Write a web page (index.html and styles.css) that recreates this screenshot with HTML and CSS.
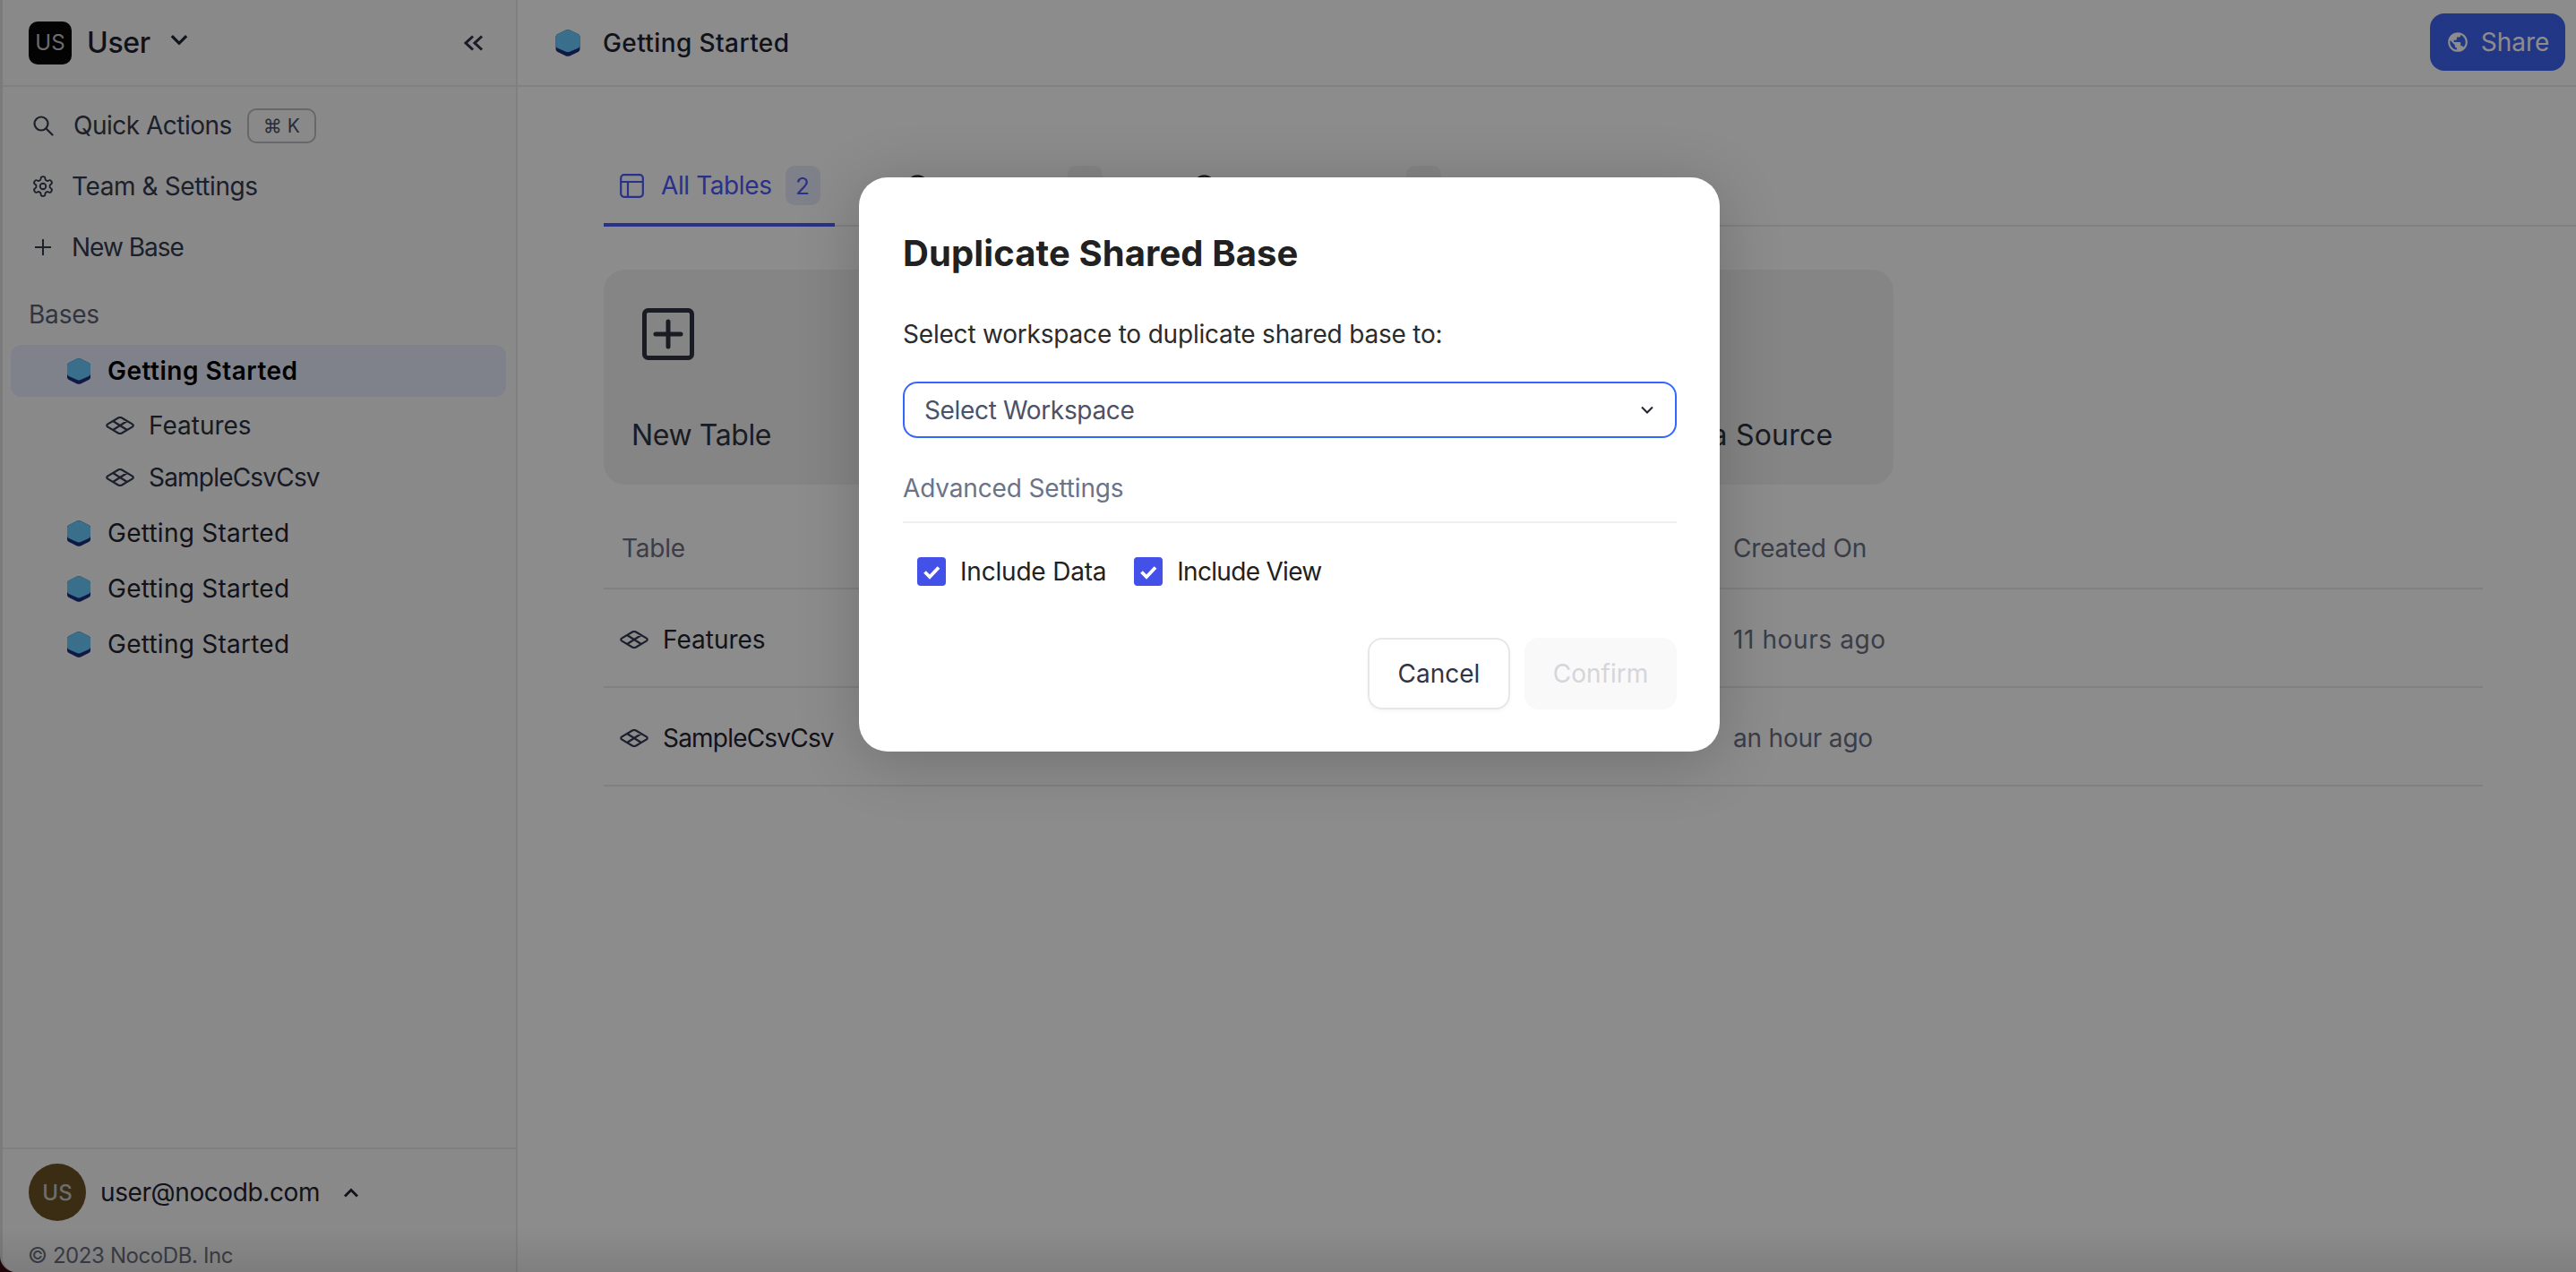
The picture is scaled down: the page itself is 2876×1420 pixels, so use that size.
FILE: index.html
```html
<!DOCTYPE html>
<html lang="en">
<head>
<meta charset="utf-8">
<title>Duplicate Shared Base</title>
<link rel="stylesheet" href="styles.css">
</head>
<body>
<svg class="defs" width="0" height="0" aria-hidden="true">
  <symbol id="base" viewBox="0 0 26 29">
    <path d="M11 .6 2 4.9C.8 5.5 0 6.7 0 8v13c0 1.3.8 2.500 2 3.100l9 4.300c1.300.6 2.700.6 4 0l9-4.300c1.200-.6 2-1.800 2-3.100V8c0-1.300-.8-2.500-2-3.100L15 .6c-1.300-.6-2.700-.6-4 0z" fill="#1a2f7c"/>
    <path d="M11 .6 2 4.900C.8 5.500 0 6.700 0 8v9c0 1.300.8 2.500 2 3.100l9 3.900c1.300.6 2.700.6 4 0l9-3.900c1.200-.6 2-1.800 2-3.100V8c0-1.300-.8-2.500-2-3.100L15 .6c-1.300-.6-2.700-.6-4 0z" fill="#6acaff"/>
  </symbol>
  <symbol id="tbl" viewBox="0 0 32 20">
    <path d="M14 1.500 2 8.600c-1 .6-1 2.200 0 2.800l12 7.100c1.300.7 2.700.7 4 0l12-7.100c1-.6 1-2.200 0-2.800L18 1.500c-1.300-.7-2.700-.7-4 0zM8.500 5.200l15 9.600M23.500 5.200l-15 9.600" fill="none" stroke="currentColor" stroke-width="2.200" stroke-linejoin="round"/>
  </symbol>
  <symbol id="earth" viewBox="0 0 24 24">
    <path fill="currentColor" d="M17.900 17.390C17.640 16.590 16.890 16 16 16H15V13A1 1 0 0 0 14 12H8V10H10A1 1 0 0 0 11 9V7H13A2 2 0 0 0 15 5V4.590C17.930 5.770 20 8.640 20 12C20 14.080 19.200 15.970 17.900 17.390M11 19.930C7.050 19.440 4 16.080 4 12C4 11.380 4.080 10.780 4.210 10.210L9 15V16A2 2 0 0 0 11 18M12 2A10 10 0 0 0 2 12A10 10 0 0 0 12 22A10 10 0 0 0 22 12A10 10 0 0 0 12 2Z"/>
  </symbol>
  <symbol id="check" viewBox="0 0 32 32">
    <path d="M8.500 16.500l5.500 5.500 10-10.500" fill="none" stroke="#fff" stroke-width="3.800"/>
  </symbol>
</svg>

<div class="app">
  <aside class="sidebar">
    <div class="side-head">
      <span class="logo">US</span>
      <span class="side-user">User</span>
      <svg class="chev-user" viewBox="0 0 18 12"><path d="M1.500 2 9 9.500 16.500 2" fill="none" stroke="currentColor" stroke-width="3"/></svg>
      <svg class="collapse" viewBox="0 0 22 18"><path d="M10 1.500 2 9l8 7.500M20 1.500 12 9l8 7.500" fill="none" stroke="currentColor" stroke-width="3"/></svg>
    </div>
    <nav class="nav">
      <div class="nav-row">
        <svg class="nav-icon" viewBox="0 0 24 24"><circle cx="10" cy="10" r="7.500" fill="none" stroke="currentColor" stroke-width="2.200"/><path d="m15.500 15.500 7 7" stroke="currentColor" stroke-width="2.200" stroke-linecap="round"/></svg>
        <span class="nav-label quick">Quick Actions</span>
        <span class="kbd">⌘ K</span>
      </div>
      <div class="nav-row">
        <svg class="nav-icon" viewBox="2 1 20 22"><path fill="none" stroke="currentColor" stroke-width="1.700" d="M12.220 2h-.44a2 2 0 0 0-2 2v.18a2 2 0 0 1-1 1.730l-.43.25a2 2 0 0 1-2 0l-.15-.08a2 2 0 0 0-2.730.73l-.22.38a2 2 0 0 0 .73 2.730l.15.1a2 2 0 0 1 1 1.720v.51a2 2 0 0 1-1 1.740l-.15.09a2 2 0 0 0-.73 2.730l.22.38a2 2 0 0 0 2.730.73l.15-.08a2 2 0 0 1 2 0l.43.25a2 2 0 0 1 1 1.730V20a2 2 0 0 0 2 2h.44a2 2 0 0 0 2-2v-.18a2 2 0 0 1 1-1.730l.43-.25a2 2 0 0 1 2 0l.15.08a2 2 0 0 0 2.730-.73l.22-.39a2 2 0 0 0-.73-2.730l-.15-.08a2 2 0 0 1-1-1.740v-.5a2 2 0 0 1 1-1.740l.15-.09a2 2 0 0 0 .73-2.730l-.22-.38a2 2 0 0 0-2.730-.73l-.15.08a2 2 0 0 1-2 0l-.43-.25a2 2 0 0 1-1-1.730V4a2 2 0 0 0-2-2z"/><circle cx="12" cy="12" r="3" fill="none" stroke="currentColor" stroke-width="1.700"/></svg>
        <span class="nav-label team">Team &amp; Settings</span>
      </div>
      <div class="nav-row">
        <svg class="nav-icon" viewBox="0 0 24 24"><path d="M12 3v18M3 12h18" stroke="currentColor" stroke-width="2"/></svg>
        <span class="nav-label newbase">New Base</span>
      </div>
    </nav>
    <div class="bases-title">Bases</div>
    <div class="base-row selected"><svg class="base-icon"><use href="#base"/></svg><span>Getting Started</span></div>
    <div class="sub-row"><svg class="tbl-icon"><use href="#tbl"/></svg><span>Features</span></div>
    <div class="sub-row"><svg class="tbl-icon"><use href="#tbl"/></svg><span class="squeeze">SampleCsvCsv</span></div>
    <div class="base-row plain"><svg class="base-icon"><use href="#base"/></svg><span>Getting Started</span></div>
    <div class="base-row plain"><svg class="base-icon"><use href="#base"/></svg><span>Getting Started</span></div>
    <div class="base-row plain"><svg class="base-icon"><use href="#base"/></svg><span>Getting Started</span></div>
    <div class="side-foot">
      <div class="foot-user">
        <span class="avatar">US</span>
        <span class="email">user@nocodb.com</span>
        <svg class="chev-up" viewBox="0 0 18 11"><path d="M2 9.500 9 2.500l7 7" fill="none" stroke="currentColor" stroke-width="2.800"/></svg>
      </div>
      <div class="copyright">© 2023 NocoDB. Inc</div>
    </div>
  </aside>

  <main class="main">
    <header class="top">
      <svg class="top-icon"><use href="#base"/></svg>
      <span class="top-title">Getting Started</span>
      <button class="share"><svg class="globe"><use href="#earth"/></svg>Share</button>
    </header>
    <section class="content">
      <div class="tabs">
        <div class="tab active">
          <svg class="tab-icon" viewBox="0 0 27 27"><rect x="1.200" y="1.200" width="24.600" height="24.600" rx="3.500" fill="none" stroke="currentColor" stroke-width="2.200"/><path d="M1.200 9h24.600M9 9v17" fill="none" stroke="currentColor" stroke-width="2.200"/></svg>
          <span class="tab-text">All Tables</span>
          <span class="count">2</span>
        </div>
        <div class="tab ghost-one">
          <svg class="tab-icon" viewBox="0 0 27 27"><circle cx="13.500" cy="13.500" r="11" fill="none" stroke="currentColor" stroke-width="2.600"/></svg>
          <span class="count ghost-count"></span>
        </div>
        <div class="tab ghost-two">
          <svg class="tab-icon" viewBox="0 0 27 27"><circle cx="13.500" cy="13.500" r="11" fill="none" stroke="currentColor" stroke-width="2.600"/></svg>
          <span class="count ghost-count"></span>
        </div>
      </div>
      <div class="cards">
        <div class="card">
          <svg class="card-icon" viewBox="0 0 58 58"><rect x="2.500" y="2.500" width="53" height="53" rx="4" fill="none" stroke="currentColor" stroke-width="5"/><path d="M29 15v28M15 29h28" stroke="currentColor" stroke-width="5" stroke-linecap="round"/></svg>
          <span class="card-label">New Table</span>
        </div>
        <div class="card"></div>
        <div class="card"><span class="card-label long">Connect to Data Source</span></div>
      </div>
      <div class="table">
        <div class="trow thead"><span>Table</span><span>Created On</span></div>
        <div class="trow">
          <span class="tname"><svg class="tbl-icon"><use href="#tbl"/></svg>Features</span>
          <span class="tdate spaced">11 hours ago</span>
        </div>
        <div class="trow">
          <span class="tname squeeze"><svg class="tbl-icon"><use href="#tbl"/></svg>SampleCsvCsv</span>
          <span class="tdate">an hour ago</span>
        </div>
      </div>
    </section>
  </main>
</div>

<div class="mask"></div>

<div class="modal">
  <h2 class="modal-title">Duplicate Shared Base</h2>
  <p class="modal-label">Select workspace to duplicate shared base to:</p>
  <div class="select">
    <span>Select Workspace</span>
    <svg class="select-chev" viewBox="0 0 14 9"><path d="M1 1.500 7 7.500l6-6" fill="none" stroke="currentColor" stroke-width="2"/></svg>
  </div>
  <div class="adv">Advanced Settings</div>
  <div class="checks">
    <label class="check"><svg class="box"><use href="#check"/></svg>Include Data</label>
    <label class="check view"><svg class="box"><use href="#check"/></svg>Include View</label>
  </div>
  <div class="actions">
    <button class="btn cancel">Cancel</button>
    <button class="btn confirm">Confirm</button>
  </div>
</div>
</body>
</html>
```

FILE: styles.css
```css
* { box-sizing: border-box; }
html, body { margin: 0; height: 100%; }
body {
  width: 2876px; height: 1420px; overflow: hidden; position: relative;
  background: #3a0a14;
  font-family: Inter, "Noto Sans", sans-serif;
  font-size: 28px; color: #1f2230;
}
.defs { position: absolute; }
.app {
  display: flex; width: 100%; height: 100%; background: #fff;
  border-left: 3px solid #e0e0e0; border-bottom-left-radius: 18px; overflow: hidden;
}

/* sidebar */
.sidebar {
  width: 575px; flex: none; display: flex; flex-direction: column;
  background: #fafafa; border-right: 2px solid #e9e9e9;
}
.side-head {
  height: 97px; flex: none; display: flex; align-items: center;
  padding: 0 38px 0 29px; border-bottom: 2px solid #e9e9e9; margin-right: -2px;
}
.logo {
  width: 48px; height: 48px; border-radius: 10px; background: #050507; color: #c4c4c4;
  display: flex; align-items: center; justify-content: center; font-size: 24px;
}
.side-user { margin-left: 17px; font-size: 32px; font-weight: 500; color: #1d2130; letter-spacing: -.3px; }
.chev-user { width: 20px; height: 13px; margin: -6px 0 0 22px; color: #1f2435; }
.collapse { width: 22px; height: 18px; margin-left: auto; color: #2b3145; }
.nav { padding-top: 9px; }
.nav-row { height: 68px; display: flex; align-items: center; padding-left: 33px; color: #333a4e; }
.nav-icon { width: 24px; height: 24px; flex: none; }
.nav-label { font-size: 28px; }
.quick { margin-left: 22px; letter-spacing: -.5px; }
.team { margin-left: 20px; letter-spacing: -.4px; }
.newbase { margin-left: 20px; letter-spacing: -1px; }
.kbd {
  margin-left: 17px; width: 77px; height: 39px; border: 2px solid #bcbcc4; border-radius: 10px;
  display: flex; align-items: center; justify-content: center; font-size: 21px; color: #4a5064;
}
.bases-title { margin: 24px 0 0 29px; height: 34px; line-height: 34px; font-size: 28px; color: #5a6072; letter-spacing: -.2px; }
.base-row { display: flex; align-items: center; padding-left: 72px; font-size: 28px; letter-spacing: .25px; }
.base-row.selected {
  height: 58px; margin: 17px 11px 3px 9px; padding-left: 63px; background: #e7ecfd; border-radius: 12px;
  font-weight: 600; color: #000; letter-spacing: .5px;
}
.base-row.plain { height: 62px; color: #1f2230; }
.sub-row + .base-row.plain { margin-top: 2px; }
.base-icon { width: 26px; height: 29px; flex: none; margin-right: 19px; }
.sub-row { height: 58px; display: flex; align-items: center; padding-left: 115px; font-size: 28px; color: #2b2f3e; }
.squeeze { letter-spacing: -.8px; }
.tbl-icon { width: 32px; height: 20px; flex: none; color: #2f3a52; }
.sub-row .tbl-icon { margin-right: 16px; }
.side-foot { margin-top: auto; border-top: 2px solid #e9e9e9; padding: 16px 0 0 29px; height: 139px; margin-right: -2px; }
.foot-user { display: flex; align-items: center; height: 64px; }
.avatar {
  width: 64px; height: 64px; border-radius: 50%; background: #6a5224; color: #c6c6c6;
  display: flex; align-items: center; justify-content: center; font-size: 24px; font-weight: 500;
}
.email { margin-left: 16px; font-size: 28px; color: #1f2230; letter-spacing: -.4px; }
.chev-up { width: 18px; height: 11px; margin-left: 26px; color: #1f2230; }
.copyright { margin-top: 24px; margin-left: -1px; font-size: 24px; color: #6a7082; letter-spacing: -.4px; }

/* main */
.main { flex: 1; min-width: 0; display: flex; flex-direction: column; background: #fff; }
.top {
  height: 97px; flex: none; display: flex; align-items: center;
  padding: 0 12px 0 42px; border-bottom: 2px solid #e9e9e9;
}
.top-icon { width: 28px; height: 30px; flex: none; margin-right: 25px; }
.top-title { font-size: 28px; font-weight: 500; color: #1f2230; letter-spacing: .4px; }
.share {
  margin-left: auto; width: 151px; height: 64px; border: 0; border-radius: 16px; background: #3e63f4;
  color: #fff; font: inherit; font-size: 28px; display: flex; align-items: center; justify-content: center; gap: 13px;
  margin-bottom: 2px;
}
.globe { width: 26px; height: 26px; }
.content { padding: 68px 96px 0; flex: 1; }
.tabs { display: flex; height: 88px; border-bottom: 2px solid #e9e9e9; width: 2204px; }
.tab { height: 88px; display: flex; align-items: flex-start; color: #2b3145; }
.tab.active {
  width: 258px; padding-left: 18px; color: #4a5af8; border-bottom: 4px solid #4a5af8; font-size: 28px;
}
.tab-icon { width: 27px; height: 27px; margin-top: 29px; flex: none; }
.tab-text { margin: 25px 0 0 19px; letter-spacing: -.4px; }
.count {
  margin: 20px 0 0 15px; width: 39px; height: 44px; background: #e7ebfb; border-radius: 10px;
  display: flex; align-items: center; justify-content: center; font-size: 26px;
}
.ghost-count { background: #f2f2f2; }
.ghost-one { margin-left: 79px; }
.ghost-one .ghost-count { margin-left: 154px; }
.ghost-two { margin-left: 100px; }
.ghost-two .ghost-count { margin-left: 212px; }
.cards { display: flex; gap: 24px; margin-top: 48px; }
.card {
  width: 464px; height: 240px; border-radius: 24px; background: #f2f2f2;
  display: flex; flex-direction: column; align-items: flex-start; padding: 43px 33px 0;
}
.card-icon { width: 58px; height: 58px; margin-left: 10px; color: #2f3342; flex: none; }
.card-label { margin-top: auto; margin-bottom: 36px; margin-left: -2px; font-size: 32px; color: #2f3342; letter-spacing: -.4px; }
.card-label.long { letter-spacing: .2px; }
.table { width: 2098px; margin-top: 25px; }
.trow {
  display: grid; grid-template-columns: 1241px 1fr; align-items: center; height: 110px;
  padding: 4px 0 0 20px; border-bottom: 2px solid #e9e9e9; color: #1f2230; font-size: 28px;
}
.thead { height: 92px; padding-top: 1px; color: #6a7082; letter-spacing: -.2px; }
.tname { display: flex; align-items: center; gap: 16px; margin-left: -2px; }
.tdate { color: #6a7082; letter-spacing: -.2px; }
.tdate.spaced { letter-spacing: .6px; }

/* overlay and dialog */
.mask {
  position: absolute; inset: 0;
  background: linear-gradient(to bottom, rgba(0,0,0,.45) 0, rgba(0,0,0,.45) 1370px, rgba(0,0,0,.5) 1420px);
}
.modal {
  position: absolute; left: 959px; top: 198px; width: 961px; height: 641px;
  background: #fff; border-radius: 32px; padding: 59px 48px 0 49px;
  box-shadow: 0 10px 70px rgba(0,0,0,.2);
}
.modal-title { margin: 0; font-size: 40px; line-height: 52px; font-weight: 650; color: #212121; letter-spacing: .1px; }
.modal-label { margin: 46px 0 0; font-size: 28px; line-height: 36px; color: #2b2b2b; letter-spacing: -.2px; }
.select {
  margin-top: 35px; height: 63px; border: 2px solid #3366ff; border-radius: 16px; padding: 0 24px 0 22px;
  display: flex; align-items: center; justify-content: space-between; font-size: 28px; color: #4a5268; letter-spacing: -.35px;
}
.select-chev { width: 14px; height: 9px; color: #1f2230; }
.adv { margin-top: 38px; height: 36px; line-height: 36px; font-size: 28px; color: #6b7388; letter-spacing: -.15px; }
.checks {
  border-top: 2px solid #f0f0f0; margin-top: 19px; padding: 38px 0 0 16px;
  display: flex; gap: 31px;
}
.check { display: flex; align-items: center; gap: 16px; font-size: 28px; color: #212121; height: 32px; letter-spacing: -.2px; }
.check.view { letter-spacing: -.7px; }
.box { width: 32px; height: 32px; background: #4351e8; border-radius: 4px; }
.actions { margin-top: 58px; display: flex; justify-content: flex-end; gap: 16px; }
.btn { height: 80px; border-radius: 16px; font: inherit; font-size: 28px; padding: 0; }
.cancel { width: 159px; border: 2px solid #e7e7e9; background: #fff; color: #2f3548; box-shadow: 0 3px 4px rgba(0,0,0,.03); }
.confirm { width: 170px; border: 0; background: #f9f9fa; color: #d5d5da; }
```
